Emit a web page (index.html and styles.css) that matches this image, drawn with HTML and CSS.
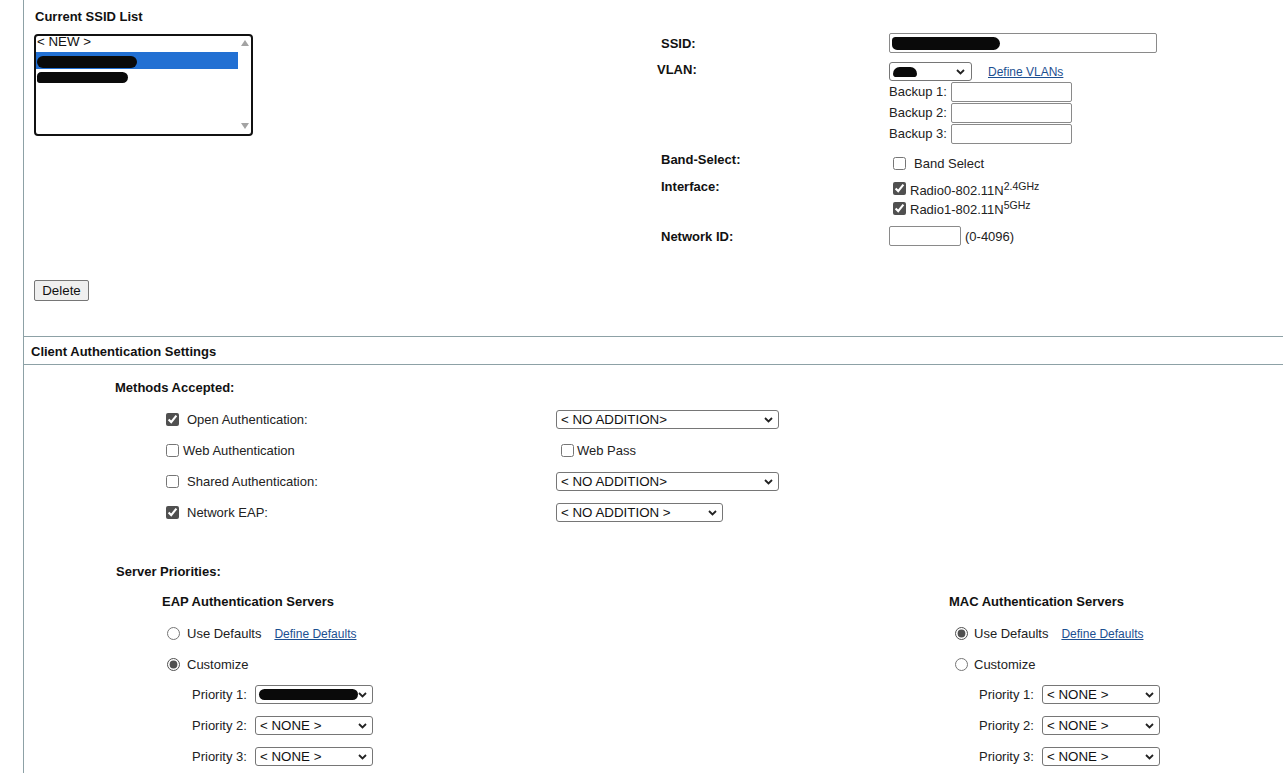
FILE: index.html
```html
<!DOCTYPE html>
<html lang="en">
<head>
    <meta charset="UTF-8">
    <title>SSID Manager</title>
    <link rel="stylesheet" href="styles.css">
</head>
<body>
    <div class="page">
        <!-- SSID list and basic settings -->
        <section class="ssid-section">
            <div class="ssid-list-col">
                <h2 class="block-title">Current SSID List</h2>
                <div class="listbox">
                    <div class="listbox-items">
                        <div class="list-item">&lt; NEW &gt;</div>
                        <div class="list-item selected"><span class="redact redact-row-a"></span></div>
                        <div class="list-item"><span class="redact redact-row-b"></span></div>
                    </div>
                    <div class="listbox-scroll">
                        <span class="scroll-arrow up"></span>
                        <span class="scroll-arrow down"></span>
                    </div>
                </div>
                <button class="btn delete-btn">Delete</button>
            </div>

            <div class="ssid-form">
                <div class="form-label label-mid">SSID:</div>
                <div class="form-value">
                    <div class="text-field ssid-field"><span class="redact redact-ssid"></span></div>
                </div>

                <div class="form-label label-vlan">VLAN:</div>
                <div class="form-value">
                    <div class="vlan-line">
                        <div class="select select-vlan">
                            <span class="redact redact-vlan"></span>
                            <svg class="chevron" width="9" height="6" viewBox="0 0 9 6"><path d="M1 1l3.5 3.5L8 1" fill="none" stroke="#222" stroke-width="1.8"/></svg>
                        </div>
                        <a href="#" class="link">Define VLANs</a>
                    </div>
                    <div class="backup-line"><span>Backup 1:</span><input type="text" class="text-input backup-input"></div>
                    <div class="backup-line"><span>Backup 2:</span><input type="text" class="text-input backup-input"></div>
                    <div class="backup-line"><span>Backup 3:</span><input type="text" class="text-input backup-input"></div>
                </div>

                <div class="form-label">Band-Select:</div>
                <div class="form-value">
                    <label class="check-line band-line"><input type="checkbox"><span>Band Select</span></label>
                </div>

                <div class="form-label">Interface:</div>
                <div class="form-value">
                    <label class="check-line radio-line"><input type="checkbox" checked><span>Radio0-802.11N<sup>2.4GHz</sup></span></label>
                    <label class="check-line radio-line"><input type="checkbox" checked><span>Radio1-802.11N<sup>5GHz</sup></span></label>
                </div>

                <div class="form-label label-mid">Network ID:</div>
                <div class="form-value netid-line">
                    <input type="text" class="text-input netid-input">
                    <span>(0-4096)</span>
                </div>
            </div>
        </section>

        <div class="section-header">Client Authentication Settings</div>

        <!-- Authentication methods -->
        <section class="auth-section">
            <div class="group-title">Methods Accepted:</div>
            <div class="methods-grid">
                <label class="check-line wide-gap"><input type="checkbox" checked><span>Open Authentication:</span></label>
                <div class="select select-wide"><span>&lt; NO ADDITION&gt;</span><svg class="chevron" width="9" height="6" viewBox="0 0 9 6"><path d="M1 1l3.5 3.5L8 1" fill="none" stroke="#222" stroke-width="1.8"/></svg></div>

                <label class="check-line"><input type="checkbox"><span>Web Authentication</span></label>
                <label class="check-line web-pass"><input type="checkbox"><span>Web Pass</span></label>

                <label class="check-line wide-gap"><input type="checkbox"><span>Shared Authentication:</span></label>
                <div class="select select-wide"><span>&lt; NO ADDITION&gt;</span><svg class="chevron" width="9" height="6" viewBox="0 0 9 6"><path d="M1 1l3.5 3.5L8 1" fill="none" stroke="#222" stroke-width="1.8"/></svg></div>

                <label class="check-line wide-gap"><input type="checkbox" checked><span>Network EAP:</span></label>
                <div class="select select-mid"><span>&lt; NO ADDITION &gt;</span><svg class="chevron" width="9" height="6" viewBox="0 0 9 6"><path d="M1 1l3.5 3.5L8 1" fill="none" stroke="#222" stroke-width="1.8"/></svg></div>
            </div>

            <div class="group-title servers-title">Server Priorities:</div>
            <div class="servers-grid">
                <div class="server-col">
                    <div class="server-title">EAP Authentication Servers</div>
                    <div class="option-row defaults-row">
                        <label class="radio-opt"><input type="radio" name="eap"><span>Use Defaults</span></label>
                        <a href="#" class="link">Define Defaults</a>
                    </div>
                    <div class="option-row customize-row">
                        <label class="radio-opt"><input type="radio" name="eap" checked><span>Customize</span></label>
                    </div>
                    <div class="priority-row">
                        <span class="priority-label">Priority 1:</span>
                        <div class="select select-small"><span class="redact redact-server"></span><svg class="chevron" width="9" height="6" viewBox="0 0 9 6"><path d="M1 1l3.5 3.5L8 1" fill="none" stroke="#222" stroke-width="1.8"/></svg></div>
                    </div>
                    <div class="priority-row">
                        <span class="priority-label">Priority 2:</span>
                        <div class="select select-small"><span>&lt; NONE &gt;</span><svg class="chevron" width="9" height="6" viewBox="0 0 9 6"><path d="M1 1l3.5 3.5L8 1" fill="none" stroke="#222" stroke-width="1.8"/></svg></div>
                    </div>
                    <div class="priority-row">
                        <span class="priority-label">Priority 3:</span>
                        <div class="select select-small"><span>&lt; NONE &gt;</span><svg class="chevron" width="9" height="6" viewBox="0 0 9 6"><path d="M1 1l3.5 3.5L8 1" fill="none" stroke="#222" stroke-width="1.8"/></svg></div>
                    </div>
                </div>

                <div class="server-col">
                    <div class="server-title">MAC Authentication Servers</div>
                    <div class="option-row defaults-row">
                        <label class="radio-opt"><input type="radio" name="mac" checked><span>Use Defaults</span></label>
                        <a href="#" class="link">Define Defaults</a>
                    </div>
                    <div class="option-row customize-row">
                        <label class="radio-opt"><input type="radio" name="mac"><span>Customize</span></label>
                    </div>
                    <div class="priority-row">
                        <span class="priority-label">Priority 1:</span>
                        <div class="select select-small"><span>&lt; NONE &gt;</span><svg class="chevron" width="9" height="6" viewBox="0 0 9 6"><path d="M1 1l3.5 3.5L8 1" fill="none" stroke="#222" stroke-width="1.8"/></svg></div>
                    </div>
                    <div class="priority-row">
                        <span class="priority-label">Priority 2:</span>
                        <div class="select select-small"><span>&lt; NONE &gt;</span><svg class="chevron" width="9" height="6" viewBox="0 0 9 6"><path d="M1 1l3.5 3.5L8 1" fill="none" stroke="#222" stroke-width="1.8"/></svg></div>
                    </div>
                    <div class="priority-row">
                        <span class="priority-label">Priority 3:</span>
                        <div class="select select-small"><span>&lt; NONE &gt;</span><svg class="chevron" width="9" height="6" viewBox="0 0 9 6"><path d="M1 1l3.5 3.5L8 1" fill="none" stroke="#222" stroke-width="1.8"/></svg></div>
                    </div>
                </div>
            </div>
        </section>
    </div>
</body>
</html>
```

FILE: styles.css
```css
body {
    margin: 0;
    padding: 0;
    background: #fff;
    color: #222;
    font-family: "Liberation Sans", Arial, sans-serif;
    font-size: 13px;
    overflow: hidden;
}

.page {
    margin-left: 23px;
    border-left: 1px solid #8da1a6;
    min-height: 773px;
}

/* Top block: SSID list + form */
.ssid-section {
    display: flex;
    height: 337px;
    box-sizing: border-box;
    border-bottom: 1px solid #8da1a6;
}

.ssid-list-col {
    width: 637px;
    box-sizing: border-box;
    padding: 9px 0 0 10px;
    display: flex;
    flex-direction: column;
    align-items: flex-start;
}

.block-title {
    margin: 0 0 10px 1px;
    font-size: 13px;
    line-height: 15px;
    font-weight: bold;
    color: #111;
}

.listbox {
    width: 219px;
    height: 102px;
    box-sizing: border-box;
    border: 2px solid #111;
    border-radius: 4px;
    display: flex;
    overflow: hidden;
}

.listbox-items {
    flex: 1;
}

.list-item {
    height: 16px;
    line-height: 12px;
    font-size: 13.33px;
    color: #111;
    padding-left: 1px;
    display: flex;
    align-items: center;
}

.list-item:first-child {
    align-items: flex-start;
}

.list-item.selected {
    background: #2270d3;
    height: 17px;
}

.listbox-scroll {
    width: 13px;
    display: flex;
    flex-direction: column;
    justify-content: space-between;
    align-items: center;
    padding: 4px 0 5px;
}

.scroll-arrow {
    width: 0;
    height: 0;
    border-left: 4px solid transparent;
    border-right: 4px solid transparent;
}

.scroll-arrow.up {
    border-bottom: 6px solid #a3a3a3;
}

.scroll-arrow.down {
    border-top: 6px solid #a3a3a3;
}

.redact {
    display: inline-block;
    background: #0a0a0a;
    border-radius: 7px;
}

.redact-row-a {
    width: 100px;
    height: 12px;
    margin-top: 2px;
}

.redact-row-b {
    width: 91px;
    height: 11px;
    border-radius: 6px 8px 8px 4px;
}

.redact-ssid {
    width: 108px;
    height: 13px;
    border-radius: 5px 9px 9px 7px;
}

.redact-vlan {
    width: 24px;
    height: 10px;
    border-radius: 8px 8px 4px 4px;
}

.redact-server {
    width: 104px;
    height: 11px;
    border-radius: 6px;
}

.btn {
    font-family: "Liberation Sans", Arial, sans-serif;
    font-size: 13.33px;
    color: #111;
    background: #efefef;
    border: 1px solid #767676;
    border-radius: 2px;
    width: 55px;
    height: 21px;
    padding: 0;
}

.delete-btn {
    margin-top: 144px;
}

.ssid-form {
    padding-top: 33px;
    display: grid;
    grid-template-columns: 228px auto;
    grid-template-rows: 21px 82px 19px 39px 20px;
    row-gap: 8px;
    align-content: start;
}

.form-label {
    font-weight: bold;
    color: #111;
    line-height: 15px;
}

.label-mid {
    align-self: center;
}

.label-mid.form-label:first-child {
    align-self: start;
    padding-top: 3px;
}

.label-vlan {
    margin-left: -4px;
}

.form-value {
    display: flex;
    flex-direction: column;
    align-items: flex-start;
}

.text-input,
.text-field {
    height: 20px;
    box-sizing: border-box;
    border: 1px solid #8a8a8a;
    border-radius: 2px;
    background: #fff;
    padding: 0 2px;
    margin: 0;
    font-family: "Liberation Sans", Arial, sans-serif;
    font-size: 13.33px;
}

.text-field {
    display: flex;
    align-items: center;
}

.ssid-field {
    width: 268px;
}

.vlan-line {
    display: flex;
    align-items: center;
    gap: 16px;
    height: 19px;
}

.link {
    color: #1c4f91;
    font-size: 12px;
    text-decoration: underline;
}

.backup-line {
    display: flex;
    align-items: center;
    gap: 4px;
    height: 21px;
    color: #222;
}

.backup-input {
    width: 121px;
}

/* Drop-down boxes */
.select {
    height: 19px;
    box-sizing: border-box;
    border: 1px solid #767676;
    border-radius: 3px;
    background: #fff;
    display: flex;
    align-items: center;
    justify-content: space-between;
    padding: 0 5px 0 4px;
    font-size: 13.33px;
    color: #111;
}

.select-vlan {
    width: 83px;
    padding-left: 3px;
    padding-right: 6px;
}

.select-wide {
    width: 223px;
}

.select-mid {
    width: 167px;
}

.select-small {
    width: 118px;
}

.select-small .redact-server {
    margin-left: -1px;
}

.chevron {
    flex-shrink: 0;
}

input[type="checkbox"],
input[type="radio"] {
    margin: 0;
    width: 13px;
    height: 13px;
    accent-color: #505050;
    flex-shrink: 0;
}

.check-line {
    display: flex;
    align-items: center;
    gap: 4px;
}

.band-line {
    margin: 4px 0 0 4px;
    gap: 8px;
}

.radio-line {
    margin-left: 4px;
    height: 20px;
}

.radio-line span {
    padding-top: 3px;
}

sup {
    font-size: 10.5px;
    line-height: 0;
    vertical-align: 5px;
}

.netid-line {
    flex-direction: row;
    align-items: center;
    gap: 4px;
}

.netid-input {
    width: 72px;
}

.section-header {
    height: 28px;
    box-sizing: border-box;
    border-bottom: 1px solid #8da1a6;
    padding: 7px 0 0 7px;
    font-weight: bold;
    color: #111;
    line-height: 15px;
}

/* Authentication methods and servers */
.auth-section {
    padding: 15px 0 0 91px;
}

.group-title {
    font-weight: bold;
    color: #111;
    line-height: 15px;
}

.methods-grid {
    margin: 9px 0 0 51px;
    display: grid;
    grid-template-columns: 390px auto;
    grid-auto-rows: 31px;
    align-items: center;
    justify-items: start;
}

.wide-gap {
    gap: 8px;
}

.web-pass {
    margin-left: 5px;
    gap: 3px;
}

.servers-title {
    margin-top: 36px;
    margin-left: 1px;
}

.servers-grid {
    margin: 15px 0 0 47px;
    display: grid;
    grid-template-columns: 787px auto;
}

.server-title {
    font-weight: bold;
    color: #111;
    line-height: 15px;
    margin-bottom: 8px;
}

.option-row {
    display: flex;
    align-items: center;
    gap: 13px;
    padding-left: 5px;
}

.defaults-row {
    height: 33px;
}

.customize-row {
    height: 29px;
}

.radio-opt {
    display: flex;
    align-items: center;
    gap: 7px;
}

.server-col:last-child .option-row {
    padding-left: 6px;
}

.server-col:last-child .radio-opt {
    gap: 6px;
}

.priority-row {
    height: 31px;
    display: flex;
    align-items: center;
    padding-left: 30px;
}

.priority-label {
    width: 63px;
}
```
